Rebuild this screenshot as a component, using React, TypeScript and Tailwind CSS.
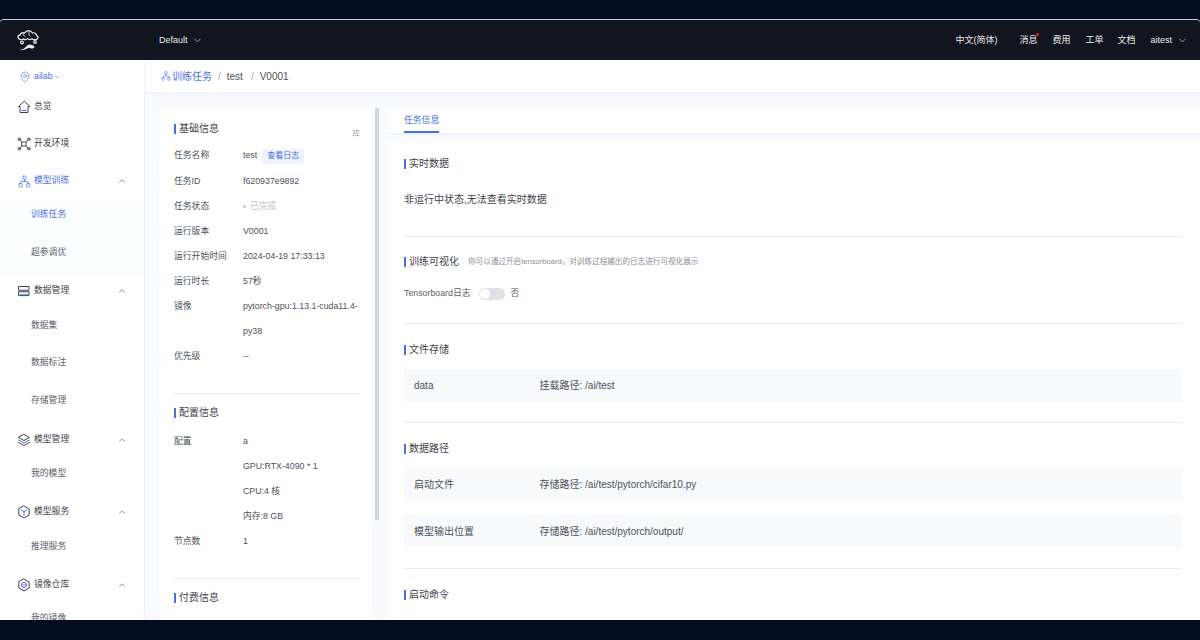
import React from "react";
import { ChevronDown, ChevronUp, MapPin, Network, SlidersHorizontal } from "lucide-react";

const font = "font-['Liberation_Sans','Noto_Sans_CJK_SC',sans-serif]";
const BLUE = "#4a6fe0";

function Logo() {
  return (
    <svg width="26" height="26" viewBox="0 0 26 26" fill="none" stroke="#dfe1e5" strokeWidth="1.3" strokeLinecap="round">
      <path d="M5.5 12.5C2.5 12 2 8.5 5 8c.5-2 3-3 4.500-2C11 3 16 3 17.500 6c2-.6 4 .5 4 2.500 2 .5 2.300 3.500-.5 4-1.500.5-3 0-4-.8-1 1.200-3.500 1.200-4.500 0-1 1.200-3 1.300-4 .3-.8.7-2 .8-3.500.5z" />
      <path d="M8 6.500c0 1.500.8 2.500 2 3M14 5.500c-.5 1.500 0 2.500 1 3.500" strokeWidth="1" />
      <circle cx="7" cy="15.500" r="1.300" />
      <circle cx="20" cy="15" r="1.300" />
      <path d="M3.500 23c3.500 0 6-1.500 8.500-4.500 1-.8 2-1 3-1l4 1.200c.8 1 .2 2.800-1.500 2.800-1.500 0-2.500-.5-4-.5-2.500 1.500-6 2.500-10 2z" fill="#e5e7eb" stroke="none" />
    </svg>
  );
}

const Svg = ({ children }: { children: React.ReactNode }) => (
  <svg width="14" height="14" viewBox="0 0 14 14" fill="none" stroke="#3f434c" strokeWidth="1" strokeLinecap="round" strokeLinejoin="round">{children}</svg>
);

const HomeIcon = () => (
  <Svg>
    <path d="M7 1.500 1.500 6.500H3v6h8v-6h1.500z" />
    <path d="M5 10.500h4" stroke={BLUE} />
  </Svg>
);
const XNodes = () => (
  <Svg>
    <path d="M3 3 5 5M11 3 9 5M3 11l2-2M11 11 9 9M5 5h4v4H5z" stroke="#4a5160" />
    <circle cx="2.200" cy="2.200" r="1.200" />
    <circle cx="11.800" cy="2.200" r="1.200" />
    <circle cx="2.200" cy="11.800" r="1.200" />
    <circle cx="11.800" cy="11.800" r="1.200" />
  </Svg>
);
const RowsIcon = () => (
  <Svg>
    <rect x="2" y="2.500" width="10" height="3.800" />
    <rect x="2" y="7.800" width="10" height="3.800" />
    <path d="M3 10.800h8" stroke={BLUE} />
  </Svg>
);
const StackIcon = () => (
  <Svg>
    <path d="M7 1.500 12.500 4.500 7 7.500 1.500 4.500z" />
    <path d="M1.500 7 7 10l5.500-3" stroke={BLUE} />
    <path d="M1.500 9.500 7 12.500l5.500-3" />
  </Svg>
);
const CubeIcon = () => (
  <Svg>
    <path d="M7 1 12.200 4v6L7 13 1.800 10V4z" />
    <path d="M4.200 4.800 7 7l2.800-2.200M7 7v3.500" stroke={BLUE} />
  </Svg>
);
const RepoIcon = () => (
  <Svg>
    <path d="M7 1 12.200 4v6L7 13 1.800 10V4z" />
    <circle cx="7" cy="7" r="2.600" stroke={BLUE} />
    <path d="M5.800 7h2.400" stroke={BLUE} />
  </Svg>
);

function MenuGroup({ icon, label, active, chevron, h }: { icon: React.ReactNode; label: string; active?: boolean; chevron?: boolean; h: string }) {
  return (
    <div className={`flex items-center ${h} pl-[17px] pr-[17px] text-[8.8px] ${active ? "text-[#4a6fe0]" : "text-[#3f434c]"}`}>
      <span className="w-[14px] flex justify-center">{icon}</span>
      <span className="ml-[3px] flex-1">{label}</span>
      {chevron && <ChevronUp size={10} strokeWidth={1.6} className="text-[#555]" />}
    </div>
  );
}

function SubItem({ label, active, h }: { label: string; active?: boolean; h: string }) {
  return <div className={`flex items-center ${h} pl-[31px] text-[8.8px] ${active ? "text-[#4a6fe0]" : "text-[#5c6068]"}`}>{label}</div>;
}

function Sidebar() {
  return (
    <aside className="w-[145px] shrink-0 bg-white border-r border-[#eef1f6] overflow-hidden">
      <div className="h-[8px]" />
      <div className="flex items-center h-[17px] pl-[19px] text-[8.8px] text-[#4a6fe0]">
        <MapPin size={12} strokeWidth={1.2} />
        <span className="ml-[3px]">ailab</span>
        <ChevronDown size={8} strokeWidth={1.5} />
      </div>
      <div className="h-[3px]" />
      <MenuGroup h="h-[38px]" icon={<HomeIcon />} label="总览" />
      <MenuGroup h="h-[36px]" icon={<XNodes />} label="开发环境" />
      <MenuGroup h="h-[38px]" icon={<Network size={13} strokeWidth={1.3} />} label="模型训练" active chevron />
      <div className="bg-[#fcfdff]">
        <SubItem h="h-[30px]" label="训练任务" active />
        <SubItem h="h-[46px]" label="超参调优" />
      </div>
      <MenuGroup h="h-[30px]" icon={<RowsIcon />} label="数据管理" chevron />
      <SubItem h="h-[40px]" label="数据集" />
      <SubItem h="h-[34px]" label="数据标注" />
      <SubItem h="h-[42px]" label="存储管理" />
      <MenuGroup h="h-[36px]" icon={<StackIcon />} label="模型管理" chevron />
      <SubItem h="h-[32px]" label="我的模型" />
      <MenuGroup h="h-[44px]" icon={<CubeIcon />} label="模型服务" chevron />
      <SubItem h="h-[26px]" label="推理服务" />
      <MenuGroup h="h-[50px]" icon={<RepoIcon />} label="镜像仓库" chevron />
      <SubItem h="h-[18px]" label="我的镜像" />
    </aside>
  );
}

function Title({ children, extra }: { children: React.ReactNode; extra?: React.ReactNode }) {
  return (
    <div className="flex items-center text-[10px] text-[#3f434c] leading-[10px]">
      <span className="w-[2px] h-[10px] bg-[#4a6fe0] mr-[3px]" />
      <span>{children}</span>
      {extra}
    </div>
  );
}

function Info({ k, v }: { k: string; v: React.ReactNode }) {
  return (
    <div className="flex h-[25.100px] items-center text-[8.8px] whitespace-nowrap">
      <span className="w-[69px] shrink-0 text-[#4d5159]">{k}</span>
      <span className="text-[#4d5159]">{v}</span>
    </div>
  );
}

function LeftCard() {
  return (
    <div className="flex shrink-0 w-[220px] h-full">
      <div className="w-[213px] bg-white pl-[15px] pr-[12px] pt-[16px] overflow-hidden">
        <Title>基础信息</Title>
        <div className="flex justify-end h-0"><SlidersHorizontal size={8} strokeWidth={1.3} className="-mt-[5px] text-[#555]" /></div>
        <div className="mt-[9.500px]">
          <Info k="任务名称" v={<span className="flex items-center">test<span className="ml-[5px] px-[5px] h-[15px] flex items-center rounded-[2px] bg-[#eef3fe] text-[#4a6fe0] text-[8px]">查看日志</span></span>} />
          <Info k="任务ID" v="f620937e9892" />
          <Info k="任务状态" v={<span className="flex items-center text-[#c4c6cb]"><span className="w-[3px] h-[3px] rounded-full bg-[#c4c6cb] mr-[4px]" />已完成</span>} />
          <Info k="运行版本" v="V0001" />
          <Info k="运行开始时间" v="2024-04-19 17:33:13" />
          <Info k="运行时长" v="57秒" />
          <Info k="镜像" v="pytorch-gpu:1.13.1-cuda11.4-" />
          <Info k="" v="py38" />
          <Info k="优先级" v="--" />
        </div>
        <div className="h-px bg-[#e9ebef] mt-[24px]" />
        <div className="mt-[14px]"><Title>配置信息</Title></div>
        <div className="mt-[10.500px]">
          <Info k="配置" v="a" />
          <Info k="" v="GPU:RTX-4090 * 1" />
          <Info k="" v="CPU:4 核" />
          <Info k="" v="内存:8 GB" />
          <Info k="节点数" v="1" />
        </div>
        <div className="h-px bg-[#e9ebef] mt-[24px]" />
        <div className="mt-[14px]"><Title>付费信息</Title></div>
      </div>
      <div className="ml-[3px] w-[4px] h-[412px] bg-[#d3d6dc]" />
    </div>
  );
}

function PathRow({ k, v }: { k: string; v: string }) {
  return (
    <div className="flex items-center h-[32px] bg-[#f8f9fb] text-[10px] text-[#4d5159]">
      <span className="w-[135.500px] pl-[10px] shrink-0">{k}</span>
      <span>{v}</span>
    </div>
  );
}

function RightCard() {
  return (
    <div className="flex-1 ml-[10px] min-w-0 flex flex-col">
      <div className="bg-white h-[27px] pl-[15px] shrink-0 border-b-2 border-[#eff4fc]">
        <div className="flex w-fit items-center h-[25px] pt-[2px] text-[8.800px] text-[#4a6fe0] border-b-2 border-[#4a6fe0]">任务信息</div>
      </div>
      <div className="mt-[6px] flex-1 bg-white pl-[15px] pr-[18px] pt-[18px] overflow-hidden">
        <Title>实时数据</Title>
        <div className="mt-[24px] text-[10px] leading-[14px] text-[#3f434c]">非运行中状态,无法查看实时数据</div>
        <div className="h-px bg-[#e9ebef] mt-[29px]" />
        <div className="mt-[20px]">
          <Title extra={<span className="ml-[9px] text-[7.600px] text-[#8a8d94]">你可以通过开启tensorboard，对训练过程输出的日志进行可视化展示</span>}>训练可视化</Title>
        </div>
        <div className="flex items-center mt-[20px] h-[14px] text-[8.800px] text-[#5c6068]">
          <span>Tensorboard日志</span>
          <span className="ml-[8px] w-[26px] h-[12px] rounded-full bg-[#dfe1e6] flex items-center px-[1px]"><span className="w-[10px] h-[10px] rounded-full bg-white" /></span>
          <span className="ml-[6px]">否</span>
        </div>
        <div className="h-px bg-[#e9ebef] mt-[22px]" />
        <div className="mt-[21px]"><Title>文件存储</Title></div>
        <div className="mt-[14px]"><PathRow k="data" v="挂载路径: /ai/test" /></div>
        <div className="h-px bg-[#e9ebef] mt-[21px]" />
        <div className="mt-[21px]"><Title>数据路径</Title></div>
        <div className="mt-[14px]"><PathRow k="启动文件" v="存储路径: /ai/test/pytorch/cifar10.py" /></div>
        <div className="mt-[15px]"><PathRow k="模型输出位置" v="存储路径: /ai/test/pytorch/output/" /></div>
        <div className="h-px bg-[#e9ebef] mt-[21px]" />
        <div className="mt-[21px]"><Title>启动命令</Title></div>
      </div>
    </div>
  );
}

export default function App() {
  return (
    <div className={`w-[1200px] h-[640px] bg-[#040d1f] flex flex-col overflow-hidden ${font}`}>
      <div className="h-[19px] shrink-0" />
      <div className="h-[601px] shrink-0 flex flex-col overflow-hidden rounded-t-[4px] border-t border-[#c9ccd2] bg-[#f8fafd]">
        <header className="h-[40px] shrink-0 bg-[#12151f] flex items-center text-[#e8e9ec] text-[9px]">
          <div className="w-[159px] pl-[15px] shrink-0"><Logo /></div>
          <div className="flex items-center pt-[1px]">Default<ChevronDown size={11} strokeWidth={1.4} className="ml-[4px]" /></div>
          <div className="ml-auto flex items-center pt-[1px]">
            <span>中文(简体)</span>
            <span className="relative ml-[22px]">消息<span className="absolute -right-[2px] -top-[1px] w-[3px] h-[3px] rounded-full bg-[#e11d2e]" /></span>
            <span className="ml-[15px]">费用</span>
            <span className="ml-[15px]">工单</span>
            <span className="ml-[14px]">文档</span>
            <span className="ml-[15px]">aitest</span>
            <ChevronDown size={11} strokeWidth={1.4} className="ml-[5px] mr-[12px]" />
          </div>
        </header>
        <div className="flex-1 flex min-h-0">
          <Sidebar />
          <main className="flex-1 min-w-0 flex flex-col">
            <div className="h-[34px] shrink-0 bg-white border-b-2 border-[#eff4fc] flex items-center pl-[16px] text-[10px] text-[#4d5159]">
              <Network size={10} strokeWidth={1.3} className="text-[#4a6fe0] mr-[1px]" />
              <span className="text-[#4a6fe0]">训练任务</span>
              <span className="mx-[6px] text-[#a8abb2]">/</span>
              <span>test</span>
              <span className="ml-[8px] mr-[6px] text-[#a8abb2]">/</span>
              <span>V0001</span>
            </div>
            <div className="flex-1 min-h-0 flex pl-[14px] pt-[14px]">
              <LeftCard />
              <RightCard />
            </div>
          </main>
        </div>
      </div>
      <div className="flex-1" />
    </div>
  );
}
